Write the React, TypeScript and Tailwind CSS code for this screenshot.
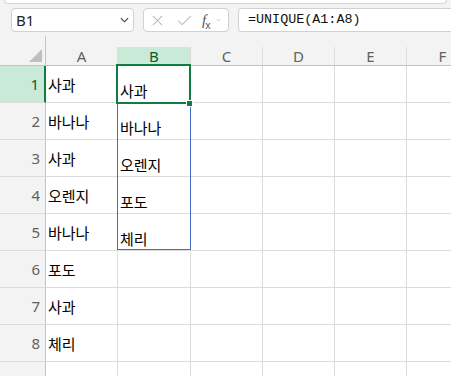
const colA = ["사과", "바나나", "사과", "오렌지", "바나나", "포도", "사과", "체리", ""];
const colB = ["사과", "바나나", "오렌지", "포도", "체리", "", "", "", ""];
const cols = [
  { name: "A", w: "w-[72px]" },
  { name: "B", w: "w-[73px]" },
  { name: "C", w: "w-[72px]" },
  { name: "D", w: "w-[72px]" },
  { name: "E", w: "w-[72px]" },
  { name: "F", w: "w-[72px]" },
];

const uiFont = "font-['Noto_Sans','Liberation_Sans',sans-serif]";
const cellFont = "font-['Noto_Sans_CJK_KR','Noto_Sans',sans-serif]";

function Chevron({ className }: { className?: string }) {
  return (
    <svg viewBox="0 0 10 6" className={className} fill="none" stroke="currentColor" strokeWidth="1.2">
      <path d="M1 1 L5 5 L9 1" />
    </svg>
  );
}

export default function App() {
  return (
    <div className={`w-[451px] h-[376px] overflow-hidden bg-[#f3f3f3] ${uiFont}`}>
      {/* ribbon bottom edge */}
      <div className="mx-[4px] h-[4px] bg-white border border-t-0 border-[#d4d4d4] rounded-b-[4px]" />

      {/* formula bar */}
      <div className="flex h-[24px] mt-[4px]">
        <div className="ml-[11px] w-[123px] flex items-center justify-between bg-white border border-[#d1d1d1] rounded-[4px] pl-[4px] pr-[4px]">
          <span className="text-[15px] text-[#242424] leading-none">B1</span>
          <Chevron className="w-[9px] h-[6px] text-[#333]" />
        </div>
        <div className="ml-[9px] w-[86px] flex items-center bg-white border border-[#d1d1d1] rounded-[4px]">
          <svg viewBox="0 0 12 12" className="ml-[8px] w-[11px] h-[11px]" stroke="#b8b8b8" strokeWidth="1.1" fill="none">
            <path d="M1 1 L11 11 M11 1 L1 11" />
          </svg>
          <svg viewBox="0 0 16 12" className="ml-[14px] w-[15px] h-[11px]" stroke="#b8b8b8" strokeWidth="1.1" fill="none">
            <path d="M1 6 L5.5 10.5 L15 1" />
          </svg>
          <span className="ml-[10px] flex items-end text-[#555] leading-none">
            <span className="font-['Liberation_Serif',serif] italic text-[15px]">f</span>
            <span className="text-[10px] -ml-[1px] mb-[-2px]">x</span>
          </span>
          <Chevron className="ml-[6px] w-[5px] h-[4px] text-[#aaa]" />
        </div>
        <div className="ml-[9px] flex-1 flex items-center bg-white border border-r-0 border-[#d1d1d1] rounded-l-[4px] pl-[9px]">
          <span className="font-['Liberation_Mono',monospace] text-[13.4px] text-[#111] leading-none">=UNIQUE(A1:A8)</span>
        </div>
      </div>

      {/* grid */}
      <div className="relative mt-[4px]">
        {/* column headers */}
        <div className="flex h-[30px]">
          <div className="w-[46px] shrink-0 border-r border-b border-[#c4c4c4] flex items-end justify-end pr-[3px] pb-[3px]">
            <svg viewBox="0 0 13 13" className="w-[13px] h-[13px]">
              <polygon points="13,0 13,13 0,13" fill="#bfbfbf" />
            </svg>
          </div>
          {cols.map((c) => (
            <div key={c.name} className={`${c.w} shrink-0 flex flex-col border-b border-[#c4c4c4]`}>
              <div className="h-[11px]" />
              <div
                className={`flex-1 flex items-center justify-center border-r border-[#dcdcdc] text-[15px] leading-none ${
                  c.name === "B" ? "bg-[#caead8] text-[#0e5a2e]" : "text-[#616161]"
                }`}
              >
                {c.name}
              </div>
            </div>
          ))}
        </div>

        {/* rows */}
        {colA.map((a, i) => (
          <div key={i} className="flex h-[37px]">
            <div
              className={`w-[46px] shrink-0 border-b border-[#dcdcdc] flex items-center justify-end pr-[5px] text-[15px] leading-none ${
                i === 0
                  ? "bg-[#caead8] text-[#0e5a2e] border-r-2 border-r-[#107c41]"
                  : "bg-[#f3f3f3] text-[#616161] border-r border-r-[#c4c4c4]"
              }`}
            >
              {i + 1}
            </div>
            {cols.map((c) => (
              <div
                key={c.name}
                className={`${c.w} shrink-0 bg-white border-r border-b border-[#dcdcdc] flex pl-[2px] ${cellFont} text-[15px] leading-none text-black ${
                  c.name === "B" ? "items-end pb-[4px]" : "items-center"
                }`}
              >
                {c.name === "A" ? a : c.name === "B" ? colB[i] : ""}
              </div>
            ))}
          </div>
        ))}

        {/* spill range */}
        <div className="absolute left-[117px] top-[68px] w-[74px] h-[146px] border-x border-b border-[#3f6fc6]" />
        {/* active cell */}
        <div className="absolute left-[116px] top-[28px] w-[75px] h-[40px] border-2 border-[#107c41]" />
        <div className="absolute left-[186px] top-[64px] w-[7px] h-[7px] bg-[#107c41] border border-white" />
      </div>
    </div>
  );
}
